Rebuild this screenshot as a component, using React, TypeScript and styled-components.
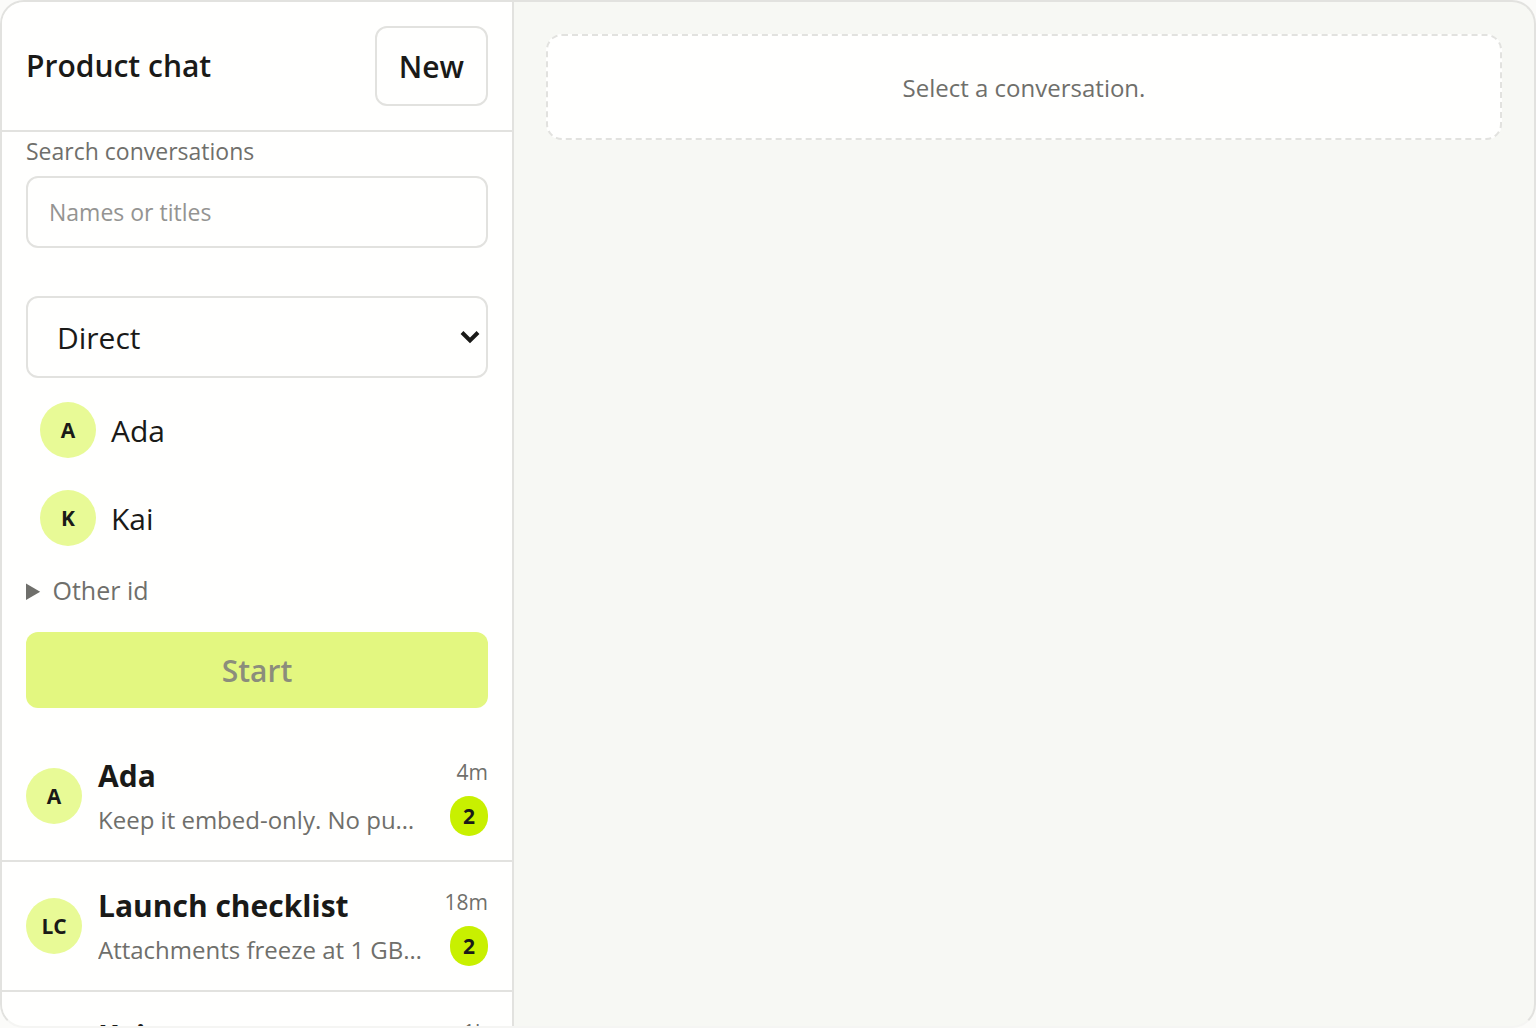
import React, { useState } from "react";
import styled, { createGlobalStyle } from "styled-components";

const color = {
  ink: "#1a1a18",
  muted: "#6f6f6b",
  placeholder: "#949492",
  line: "#e2e2df",
  surface: "#fffffe",
  canvas: "#f7f8f4",
  lime: "#c8f000",
  limeSoft: "#e8fa96",
};

const GlobalStyle = createGlobalStyle`
  *, *::before, *::after { box-sizing: border-box; }
  body {
    margin: 0;
    background: #fbfbf9;
    color: ${color.ink};
    font-family: "Open Sans", "Noto Sans", sans-serif;
    font-size: 30px;
  }
  button, input, select { font: inherit; color: inherit; }
`;

const Shell = styled.div`
  display: grid;
  grid-template-columns: 512px minmax(0, 1fr);
  height: 100vh;
  overflow: hidden;
  border: 2px solid ${color.line};
  border-bottom-color: #f5f5f3;
  border-radius: 24px;
  background: ${color.canvas};
`;

const Sidebar = styled.aside`
  display: flex;
  flex-direction: column;
  min-height: 0;
  overflow: hidden;
  border-right: 2px solid ${color.line};
  background: ${color.surface};
`;

const Header = styled.header`
  display: flex;
  flex-shrink: 0;
  align-items: center;
  justify-content: space-between;
  padding: 24px;
  border-bottom: 2px solid ${color.line};
`;

const Title = styled.h1`
  margin: 0;
  font-size: 30px;
  font-weight: 600;
  line-height: 42px;
`;

const NewButton = styled.button`
  height: 80px;
  padding: 0 22px;
  border: 2px solid ${color.line};
  border-radius: 12px;
  background: ${color.surface};
  font-weight: 600;
`;

const Search = styled.div`
  display: flex;
  flex-direction: column;
  flex-shrink: 0;
  gap: 6px;
  padding: 0 24px 24px;
`;

const SearchLabel = styled.label`
  color: ${color.muted};
  font-size: 23px;
  line-height: 38px;
`;

const SearchInput = styled.input`
  width: 100%;
  height: 72px;
  padding: 0 21px;
  border: 2px solid ${color.line};
  border-radius: 12px;
  background: ${color.surface};
  font-size: 23px;
  &::placeholder { color: ${color.placeholder}; opacity: 1; }
`;

const Form = styled.form`
  display: flex;
  flex-direction: column;
  flex-shrink: 0;
  gap: 12px;
  padding: 24px;
`;

const SelectBox = styled.div`
  display: grid;
  align-items: center;
  > * { grid-area: 1 / 1; }
`;

const KindSelect = styled.select`
  width: 100%;
  height: 82px;
  padding: 0 48px 0 29px;
  border: 2px solid ${color.line};
  border-radius: 12px;
  background: ${color.surface};
  appearance: none;
`;

const Chevron = styled.svg`
  justify-self: end;
  margin-right: 8px;
  pointer-events: none;
`;

const People = styled.div`
  display: flex;
  flex-direction: column;
  gap: 8px;
`;

const Person = styled.button`
  display: flex;
  align-items: center;
  gap: 15px;
  height: 80px;
  padding: 0 14px;
  border: 0;
  border-radius: 12px;
  background: transparent;
  text-align: left;
`;

const Avatar = styled.span`
  display: flex;
  flex-shrink: 0;
  align-items: center;
  justify-content: center;
  width: 56px;
  height: 56px;
  border-radius: 50%;
  background: ${color.limeSoft};
  font-size: 21px;
  font-weight: 700;
`;

const Other = styled.details`
  margin-bottom: 10px;
  color: ${color.muted};
  font-size: 25px;
  line-height: 40px;
`;

const StartButton = styled.button`
  height: 76px;
  border: 0;
  border-radius: 12px;
  background: #e3f780;
  font-weight: 600;
  &:disabled { color: #8b8d7c; }
`;

const Conversations = styled.ul`
  margin: 0;
  padding: 0;
  list-style: none;
`;

const Conversation = styled.button`
  display: flex;
  align-items: center;
  gap: 16px;
  width: 100%;
  padding: 20px 24px;
  border: 0;
  border-bottom: 2px solid ${color.line};
  background: transparent;
  text-align: left;
`;

const Summary = styled.span`
  display: flex;
  flex: 1;
  flex-direction: column;
  min-width: 0;
`;

const Name = styled.span`
  font-weight: 700;
  line-height: 48px;
`;

const Preview = styled.span`
  min-height: 40px;
  overflow: hidden;
  color: ${color.muted};
  font-size: 24px;
  line-height: 40px;
  text-overflow: ellipsis;
  white-space: nowrap;
`;

const Meta = styled.span`
  display: flex;
  flex-direction: column;
  flex-shrink: 0;
  align-items: flex-end;
  align-self: flex-start;
  gap: 4px;
  min-width: 48px;
`;

const Time = styled.time`
  color: ${color.muted};
  font-size: 21px;
  line-height: 40px;
`;

const Badge = styled.span`
  display: flex;
  align-items: center;
  justify-content: center;
  min-width: 38px;
  height: 40px;
  border-radius: 20px;
  background: ${color.lime};
  font-size: 21px;
  font-weight: 700;
`;

const Main = styled.main`
  min-width: 0;
  padding: 32px;
`;

const Empty = styled.p`
  margin: 0;
  padding: 32px 32px 30px;
  border: 2px dashed ${color.line};
  border-radius: 16px;
  background: ${color.surface};
  color: ${color.muted};
  font-size: 24px;
  line-height: 40px;
  text-align: center;
`;

const people = [
  { initials: "A", name: "Ada" },
  { initials: "K", name: "Kai" },
];

const conversations = [
  { initials: "A", name: "Ada", preview: "Keep it embed-only. No public pages.", time: "4m", unread: 2 },
  { initials: "LC", name: "Launch checklist", preview: "Attachments freeze at 1 GB per workspace.", time: "18m", unread: 2 },
  { initials: "K", name: "Kai", preview: "", time: "1h", unread: 0 },
];

export default function App() {
  const [query, setQuery] = useState("");
  const [kind, setKind] = useState("direct");

  return (
    <>
      <GlobalStyle />
      <Shell>
        <Sidebar>
          <Header>
            <Title>Product chat</Title>
            <NewButton type="button">New</NewButton>
          </Header>
          <Search>
            <SearchLabel htmlFor="search">Search conversations</SearchLabel>
            <SearchInput
              id="search"
              type="text"
              placeholder="Names or titles"
              value={query}
              onChange={(e) => setQuery(e.target.value)}
            />
          </Search>
          <Form onSubmit={(e) => e.preventDefault()}>
            <SelectBox>
              <KindSelect
                aria-label="Conversation type"
                value={kind}
                onChange={(e) => setKind(e.target.value)}
              >
                <option value="direct">Direct</option>
              </KindSelect>
              <Chevron width="20" height="14" viewBox="0 0 20 14" aria-hidden="true">
                <path d="M2 2.5 10 10.5 18 2.5" fill="none" stroke={color.ink} strokeWidth="4" />
              </Chevron>
            </SelectBox>
            <People>
              {people.map((p) => (
                <Person key={p.name} type="button">
                  <Avatar>{p.initials}</Avatar>
                  {p.name}
                </Person>
              ))}
            </People>
            <Other>
              <summary>Other id</summary>
            </Other>
            <StartButton type="submit" disabled>Start</StartButton>
          </Form>
          <Conversations>
            {conversations.map((c) => (
              <li key={c.name}>
                <Conversation type="button">
                  <Avatar>{c.initials}</Avatar>
                  <Summary>
                    <Name>{c.name}</Name>
                    <Preview>{c.preview}</Preview>
                  </Summary>
                  <Meta>
                    <Time>{c.time}</Time>
                    {c.unread > 0 && <Badge>{c.unread}</Badge>}
                  </Meta>
                </Conversation>
              </li>
            ))}
          </Conversations>
        </Sidebar>
        <Main>
          <Empty>Select a conversation.</Empty>
        </Main>
      </Shell>
    </>
  );
}
